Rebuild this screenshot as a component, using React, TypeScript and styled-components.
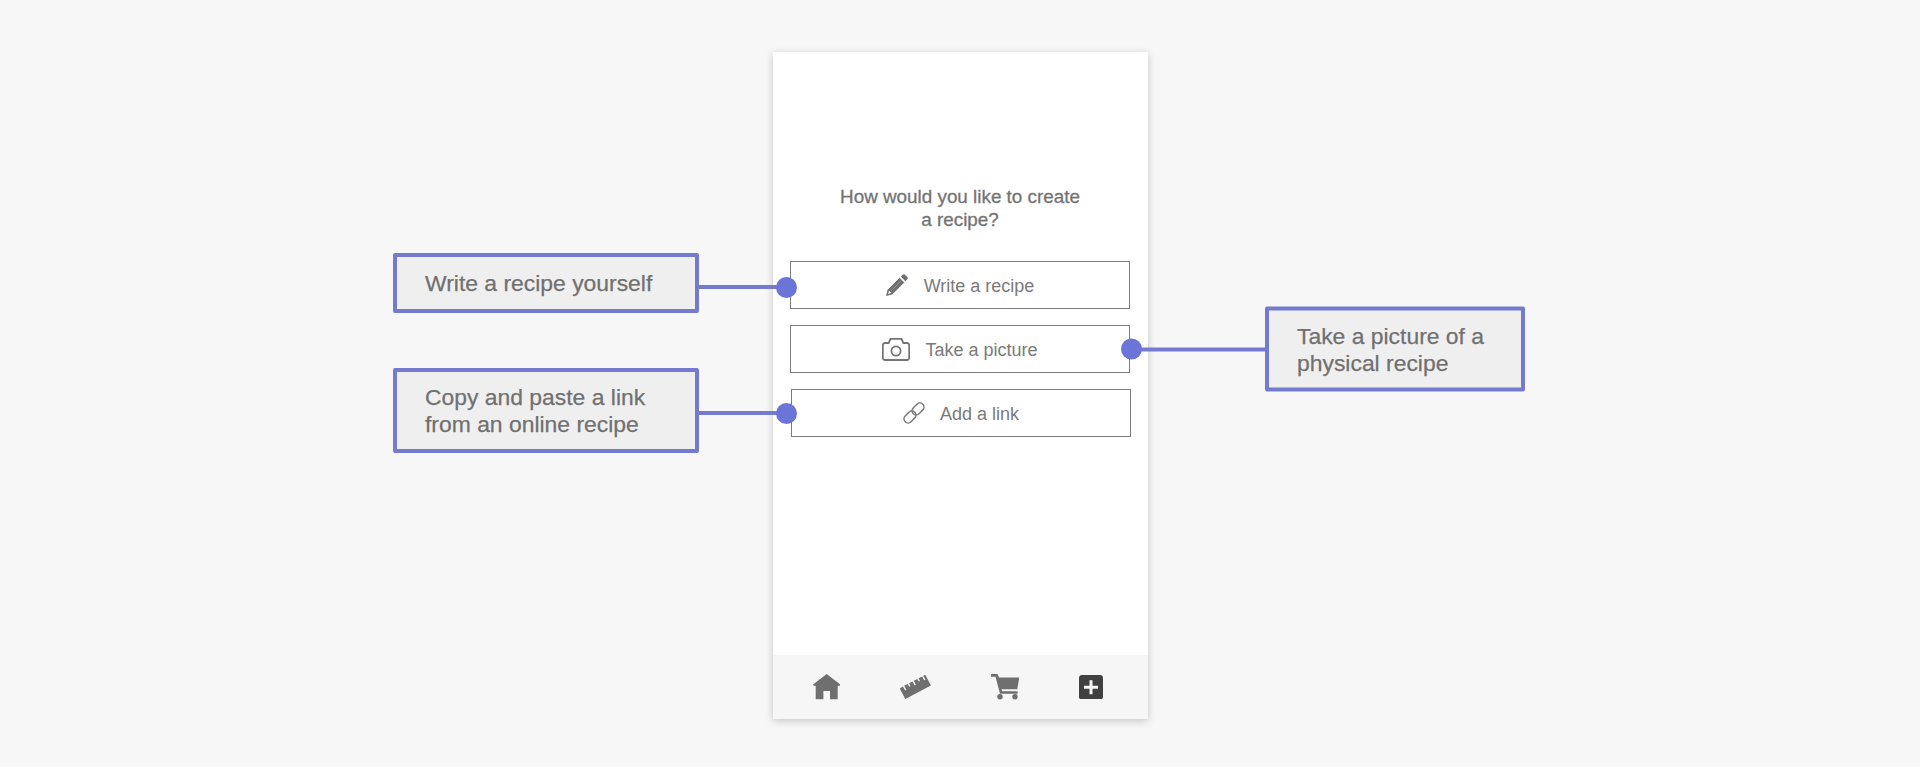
import React from "react";
import styled, { createGlobalStyle } from "styled-components";

const Global = createGlobalStyle`
  html, body { margin: 0; padding: 0; background: #f7f7f7; }
  body { font-family: "Liberation Sans", Arial, sans-serif; color: #6d6d6d; }
`;

const Page = styled.div`
  width: 1920px;
  height: 767px;
  box-sizing: border-box;
  padding: 52px 0 0 773px;
  overflow: hidden;
`;

const Phone = styled.div`
  width: 375px;
  height: 667px;
  background: #fff;
  box-shadow: 0 2px 8px rgba(0, 0, 0, 0.2);
  display: flex;
  flex-direction: column;
`;

const Content = styled.div`
  flex: 1;
  padding: 134px 18px 0 17px;
  display: flex;
  flex-direction: column;
`;

const Question = styled.h1`
  margin: 0 0 30px;
  font-size: 18.85px;
  line-height: 22.5px;
  font-weight: 400;
  text-align: center;
  color: #737373;
  -webkit-text-stroke: 0.3px #737373;
`;

const Options = styled.div`
  display: flex;
  flex-direction: column;
  gap: 16px;
`;

const Option = styled.div<{ $nudge?: number; $gap: number }>`
  position: relative;
  height: 48px;
  box-sizing: border-box;
  border: 1px solid #7c7c7c;
  background: #fff;
  display: flex;
  align-items: center;
  justify-content: center;
  gap: ${(p) => p.$gap}px;
  margin: 0 ${(p) => -(p.$nudge ?? 0)}px 0 ${(p) => p.$nudge ?? 0}px;
`;

const OptionLabel = styled.span`
  font-size: 18px;
  padding-top: 3px;
  color: #7a7a7a;
`;

const Annotation = styled.div<{ $side: "left" | "right"; $inset: number; $dy: number }>`
  position: absolute;
  top: calc(50% + ${(p) => p.$dy}px);
  display: flex;
  align-items: center;
  transform: translateY(-50%);
  ${(p) =>
    p.$side === "left"
      ? `right: calc(100% - ${p.$inset}px);`
      : `left: calc(100% - ${p.$inset}px); flex-direction: row-reverse;`}
`;

const Callout = styled.div<{ $w: number; $h: number; $lift?: number; $pad: number }>`
  width: ${(p) => p.$w}px;
  height: ${(p) => p.$h}px;
  margin-bottom: ${(p) => p.$lift ?? 0}px;
  box-sizing: border-box;
  border: 4px solid #747bcf;
  border-radius: 2px;
  background: #efefef;
  padding-left: ${(p) => p.$pad}px;
  display: flex;
  align-items: center;
  font-size: 22.9px;
  line-height: 27px;
  color: #707070;
  -webkit-text-stroke: 0.25px #707070;
`;

const Line = styled.div<{ $w: number }>`
  width: ${(p) => p.$w}px;
  height: 4px;
  background: #747bcf;
`;

const Dot = styled.div`
  width: 21px;
  height: 21px;
  border-radius: 50%;
  background: #6b75d8;
  flex: none;
  margin: 0 -1px;
`;

const TabBar = styled.nav`
  height: 64px;
  box-sizing: border-box;
  background: #f6f6f6;
  display: flex;
  align-items: center;
  justify-content: space-between;
  padding: 0 45px 0 40px;
`;

const Svg = styled.svg`
  display: block;
  flex: none;
`;

const Pencil = () => (
  <Svg width="22" height="22" viewBox="0 0 22 22" fill="#6f6f6f">
    <path d="M0 22l1.600-6.200L13.600 3.800l4.600 4.600L6.200 20.400 0 22zm3-5.200l-.9 3.100 3.100-.9L3 16.800z" fillRule="evenodd" />
    <path d="M14.800 2.600l1.900-1.900c.7-.7 1.600-.7 2.300 0l2.300 2.300c.7.7.7 1.600 0 2.300l-1.900 1.900-4.600-4.600z" />
    <path d="M5 17L15.500 6.500" stroke="#fff" strokeOpacity="0.35" strokeWidth="0.8" />
  </Svg>
);

const Camera = () => (
  <Svg width="28" height="23" viewBox="0 0 28 23" fill="none" stroke="#747474" strokeWidth="1.8" strokeLinejoin="round">
    <path d="M3 5h3.600l2-4.200h10.800l2 4.200H25a2.200 2.200 0 0 1 2.200 2.200v12.600A2.200 2.200 0 0 1 25 22H3a2.200 2.200 0 0 1-2.200-2.200V7.200A2.200 2.200 0 0 1 3 5z" />
    <circle cx="14" cy="13" r="4.600" />
  </Svg>
);

const LinkIcon = () => (
  <Svg width="22" height="22" viewBox="0 0 22 22" fill="none" stroke="#777" strokeWidth="1.5">
    <rect x="0.25" y="10.900" width="13.500" height="8.200" rx="4.100" transform="rotate(-45 7 15)" />
    <rect x="8.250" y="2.900" width="13.500" height="8.200" rx="4.100" transform="rotate(-45 15 7)" />
  </Svg>
);

const Home = () => (
  <Svg width="27.400" height="25.300" viewBox="0 0 27.400 25.300" fill="#6f6f6f">
    <path d="M13.700 0l13.700 10.600-.6 1.100h-2.100v13.600H17V17h-6.600v8.300H2.700V11.700H.6L0 10.600z" />
  </Svg>
);

const Ruler = () => (
  <Svg width="30.600" height="23.700" viewBox="0 0 30.600 23.700" fill="#6f6f6f">
    <g transform="rotate(-28 15.300 11.850)">
      <path d="M.8 5.800h3.800v4.500H6V5.800h4v3h1.400v-3h4v4.500h1.400V5.800h4v3h1.400v-3h4v4.500h1.400V5.800h2.200v12.100H.8z" />
    </g>
  </Svg>
);

const Cart = () => (
  <Svg width="28.300" height="25.400" viewBox="0 0 28.300 25.400" fill="#6f6f6f">
    <path d="M0 0h6.600l1.400 3.600h20.300l-2 11.600H10.600l.5 2h15.500v2.600H9L4.500 2.800H0z" />
    <circle cx="9" cy="22.700" r="2.700" />
    <circle cx="24" cy="22.700" r="2.700" />
  </Svg>
);

const PlusBox = () => (
  <Svg width="24" height="24.700" viewBox="0 0 24 24.700">
    <rect width="24" height="24.700" rx="3" fill="#404040" />
    <path d="M10.500 5.300h3v5.500h5.500v3h-5.500v5.500h-3v-5.500H5v-3h5.500z" fill="#f6f6f6" />
  </Svg>
);

export default function App() {
  return (
    <>
      <Global />
      <Page>
        <Phone>
          <Content>
            <Question>
              How would you like to create
              <br />a recipe?
            </Question>
            <Options>
              <Option $gap={16}>
                <Annotation $side="left" $inset={5} $dy={2}>
                  <Callout $w={306} $h={60} $lift={8} $pad={28}>Write a recipe yourself</Callout>
                  <Line $w={78} />
                  <Dot />
                </Annotation>
                <Pencil />
                <OptionLabel>Write a recipe</OptionLabel>
              </Option>
              <Option $gap={15}>
                <Annotation $side="right" $inset={7} $dy={0}>
                  <Callout $w={260} $h={85} $pad={28}>
                    <span>Take a picture of a<br />physical recipe</span>
                  </Callout>
                  <Line $w={124} />
                  <Dot />
                </Annotation>
                <Camera />
                <OptionLabel>Take a picture</OptionLabel>
              </Option>
              <Option $nudge={1} $gap={15}>
                <Annotation $side="left" $inset={4} $dy={0}>
                  <Callout $w={306} $h={85} $lift={5} $pad={28}>
                    <span>Copy and paste a link<br />from an online recipe</span>
                  </Callout>
                  <Line $w={78} />
                  <Dot />
                </Annotation>
                <LinkIcon />
                <OptionLabel>Add a link</OptionLabel>
              </Option>
            </Options>
          </Content>
          <TabBar>
            <Home />
            <Ruler />
            <Cart />
            <PlusBox />
          </TabBar>
        </Phone>
      </Page>
    </>
  );
}
